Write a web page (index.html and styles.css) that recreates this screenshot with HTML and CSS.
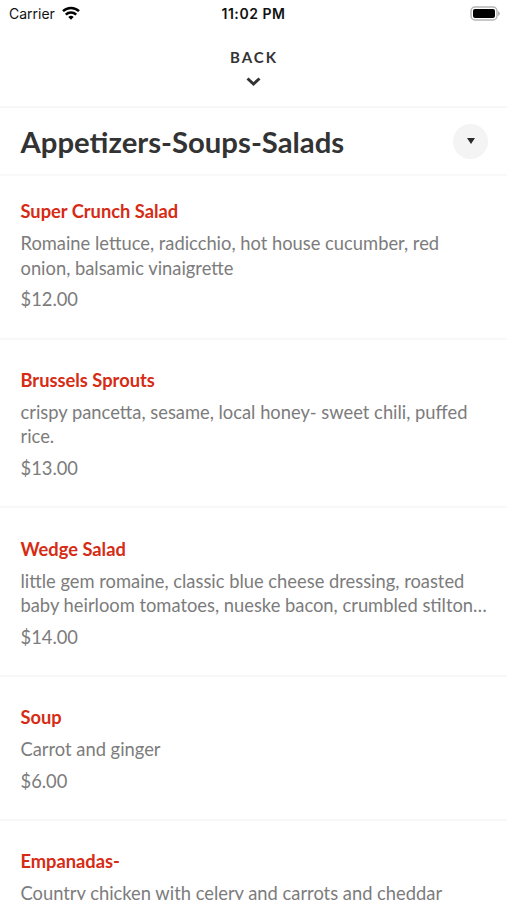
FILE: index.html
```html
<!DOCTYPE html>
<html lang="en">
<head>
    <meta charset="UTF-8">
    <meta name="viewport" content="width=device-width, initial-scale=1.0">
    <title>Menu</title>
    <link rel="stylesheet" href="styles.css">
</head>
<body>
    <div class="status-bar">
        <div class="carrier">
            <span>Carrier</span>
            <svg width="18" height="14" viewBox="0 0 18 14">
                <path d="M1 5.2a11.5 11.5 0 0 1 16 0M3.8 8.6a7.5 7.5 0 0 1 10.4 0" fill="none" stroke="#000" stroke-width="2.5"/>
                <path d="M9 13.8l-2.7-2.8a4 4 0 0 1 5.4 0z"/>
            </svg>
        </div>
        <div class="time">11:02 PM</div>
        <svg class="battery" width="31" height="15" viewBox="0 0 31 15">
            <rect x="1" y="1" width="26" height="13" rx="4" fill="#fff" stroke="#b5b5b5" stroke-width="1.5"/>
            <rect x="3" y="3" width="22" height="9" rx="2"/>
            <path d="M28 5v5q2-1 2-2.5t-2-2.5z" fill="#b5b5b5"/>
        </svg>
    </div>

    <header class="back">
        <span class="back-label">BACK</span>
        <svg width="16" height="10" viewBox="0 0 16 10">
            <path d="M1.5 1.5l6 5.5 6-5.5" fill="none" stroke="#333" stroke-width="3"/>
        </svg>
    </header>

    <div class="category">
        <h1>Appetizers-Soups-Salads</h1>
        <button class="dropdown" type="button" aria-label="Choose category">
            <svg width="10" height="8" viewBox="0 0 10 8">
                <path d="M1 1h8l-4 6z" fill="#2b2b2b"/>
            </svg>
        </button>
    </div>

    <main class="menu">
        <article class="item">
            <h2>Super Crunch Salad</h2>
            <p class="description">Romaine lettuce, radicchio, hot house cucumber, red<br>onion, balsamic vinaigrette</p>
            <p class="price">$12.00</p>
        </article>
        <article class="item">
            <h2>Brussels Sprouts</h2>
            <p class="description">crispy pancetta, sesame, local honey- sweet chili, puffed<br>rice.</p>
            <p class="price">$13.00</p>
        </article>
        <article class="item">
            <h2>Wedge Salad</h2>
            <p class="description">little gem romaine, classic blue cheese dressing, roasted<br>baby heirloom tomatoes, nueske bacon, crumbled stilton…</p>
            <p class="price">$14.00</p>
        </article>
        <article class="item">
            <h2>Soup</h2>
            <p class="description">Carrot and ginger</p>
            <p class="price">$6.00</p>
        </article>
        <article class="item">
            <h2>Empanadas-</h2>
            <p class="description">Country chicken with celery and carrots and cheddar</p>
        </article>
    </main>
</body>
</html>
```

FILE: styles.css
```css
* {
    box-sizing: border-box;
}

body {
    font-family: Lato, sans-serif;
    background-color: #fff;
    color: #333;
    margin: 0;
    height: 900px;
    overflow: hidden;
}

h1, h2, p {
    margin: 0;
}

svg {
    display: block;
}

.status-bar {
    display: grid;
    grid-template-columns: 1fr auto 1fr;
    align-items: center;
    height: 27px;
    padding: 0 6px 0 9px;
    font-family: Inter, sans-serif;
    font-size: 14px;
    color: #111;
}

.carrier {
    display: flex;
    align-items: center;
    gap: 7px;
}

.carrier svg {
    margin-bottom: 2px;
}

.time {
    font-weight: 600;
    letter-spacing: 0.55px;
    margin-right: 3px;
}

.battery {
    justify-self: end;
    margin-bottom: 1px;
}

.back {
    display: flex;
    flex-direction: column;
    align-items: center;
    height: 81px;
    padding-top: 20px;
    border-bottom: 2px solid #f7f7f7;
}

.back-label {
    font-size: 15px;
    font-weight: bold;
    line-height: 20px;
    letter-spacing: 2px;
    margin: 0 0 10px 1px;
}

.category {
    display: flex;
    align-items: center;
    justify-content: space-between;
    height: 68px;
    padding: 0 19px 0 20.5px;
    border-bottom: 2px solid #f9f9f9;
}

.category h1 {
    font-size: 29.3px;
    font-weight: bold;
    line-height: 36px;
    padding-top: 2px;
}

.dropdown {
    display: flex;
    align-items: center;
    justify-content: center;
    width: 35px;
    height: 35px;
    padding: 0;
    border: none;
    border-radius: 50%;
    background-color: #f4f4f4;
}

.item {
    padding: 28.2px 18px 25.8px 20.5px;
    border-bottom: 2px solid #f8f8f8;
}

.item:first-child {
    padding-top: 23px;
}

.item h2 {
    font-size: 18.3px;
    font-weight: bold;
    line-height: 25px;
    color: #d62b14;
    margin-bottom: 7px;
}

.description,
.price {
    font-size: 18.33px;
    line-height: 24.6px;
    color: #7c7c7c;
    white-space: nowrap;
}

.price {
    margin-top: 7px;
}
```
